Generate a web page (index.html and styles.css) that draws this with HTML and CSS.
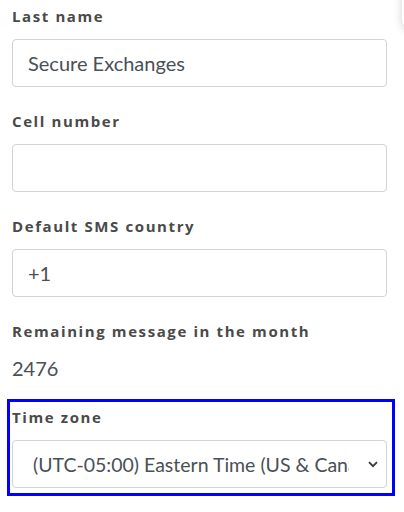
FILE: index.html
```html
<!DOCTYPE html>
<html>
<head>
<meta charset="utf-8">
<link rel="stylesheet" href="styles.css">
</head>
<body>
<div class="corner"></div>
<form class="form">
  <div class="field">
    <label class="label">Last name</label>
    <div class="input">Secure Exchanges</div>
  </div>
  <div class="field">
    <label class="label">Cell number</label>
    <div class="input"></div>
  </div>
  <div class="field">
    <label class="label">Default SMS country</label>
    <div class="input">+1</div>
  </div>
  <div class="field field-value">
    <label class="label">Remaining message in the month</label>
    <div class="value">2476</div>
  </div>
  <div class="field focus">
    <label class="label">Time zone</label>
    <div class="select">
      <span class="select-text">(UTC-05:00) Eastern Time (US &amp; Canada)</span>
      <svg class="chev" width="10" height="7" viewBox="0 0 10 7"><path d="M1 1.2 L5 5.2 L9 1.2" fill="none" stroke="#343a40" stroke-width="1.8"/></svg>
    </div>
  </div>
</form>
</body>
</html>
```
FILE: styles.css
```css
html, body {
  margin: 0;
  padding: 0;
  background: #fff;
}
body {
  font-family: Lato, "Liberation Sans", sans-serif;
  color: #495057;
  width: 404px;
  height: 512px;
  overflow: hidden;
  position: relative;
}
.corner {
  position: absolute;
  left: 402px;
  top: -12px;
  width: 60px;
  height: 40px;
  border-radius: 8px;
  background: #fff;
  box-shadow: 0 2px 10px rgba(0,0,0,0.18);
}
.form {
  display: flex;
  flex-direction: column;
  padding: 6px 17px 0 12px;
}
.field {
  display: flex;
  flex-direction: column;
  margin-bottom: 24px;
}
.label {
  font-family: "Open Sans", "Liberation Sans", sans-serif;
  font-weight: 700;
  font-size: 15px;
  letter-spacing: 1.6px;
  color: #4a4a4a;
  line-height: 20px;
  margin-bottom: 13px;
}
.input, .select {
  box-sizing: border-box;
  height: 48px;
  border: 1px solid #ced4da;
  border-radius: 4px;
  font-size: 20px;
  color: #495057;
  display: flex;
  align-items: center;
  padding-left: 15px;
}
.field-value {
  margin-bottom: 20px;
}
.value {
  font-size: 20px;
  color: #495057;
  line-height: 22px;
  margin-top: 3px;
}
.focus {
  margin: 0 -8px 0 -5px;
  padding: 5px 5px 5px 2px;
  border: 3px solid #0000ff;
}
.select {
  font-size: 19.5px;
  padding-left: 20px;
  padding-right: 8px;
}
.select-text {
  flex: 1;
  min-width: 0;
  white-space: nowrap;
  overflow: hidden;
  margin-right: 19px;
}
.chev {
  flex: none;
}
```
